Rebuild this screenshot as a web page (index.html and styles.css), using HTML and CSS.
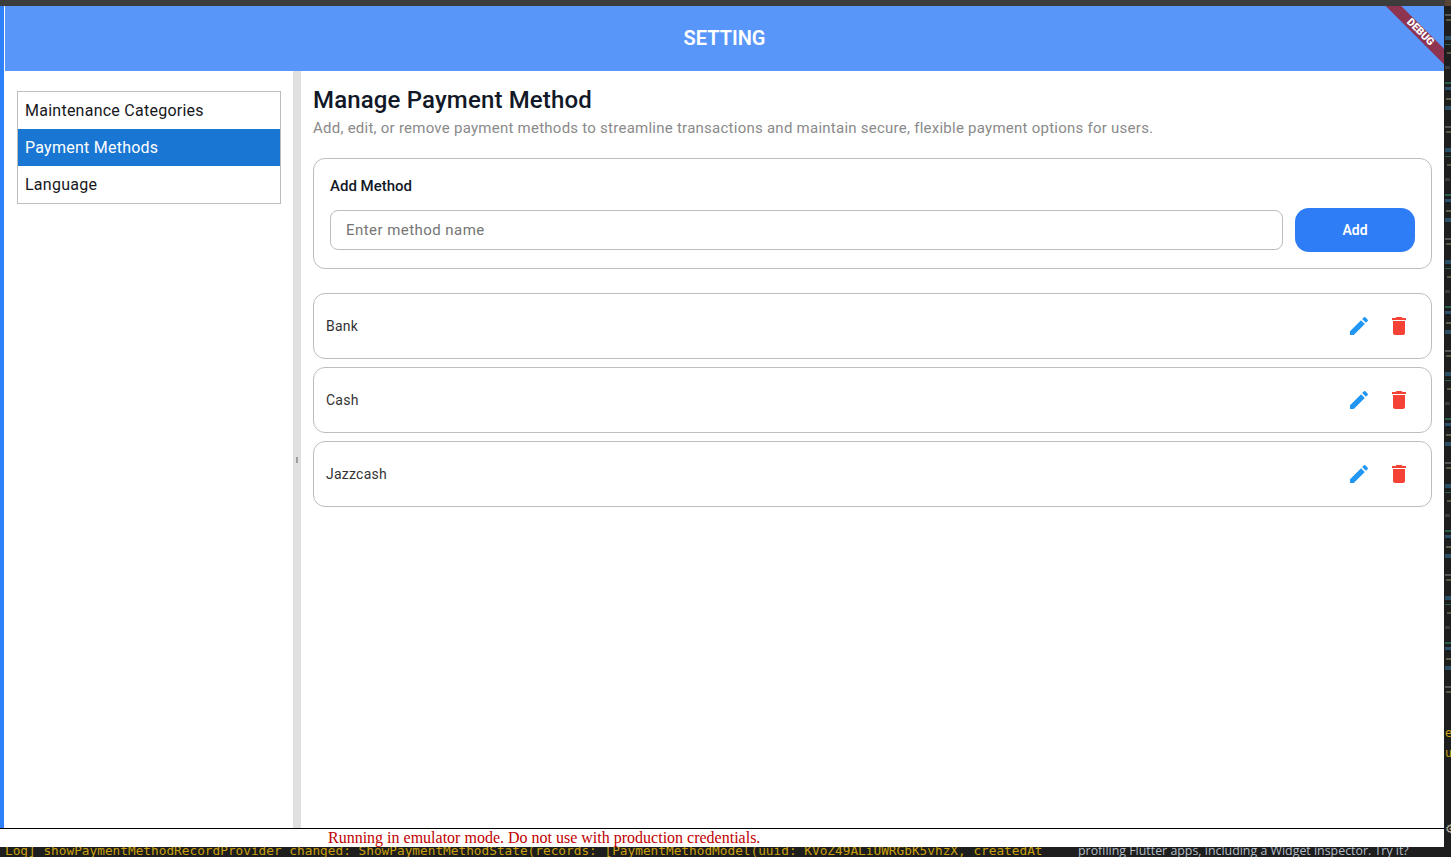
FILE: index.html
```html
<!DOCTYPE html>
<html lang="en">
<head>
<meta charset="utf-8">
<title>Setting</title>
<link rel="stylesheet" href="styles.css">
</head>
<body>
<div class="desktop">
  <div class="titlebar"></div>
  <div class="workspace">
    <div class="window">
      <div class="app">
        <div class="accent"></div>
        <div class="shell">
          <header class="appbar"><h1 class="appbar-title">SETTING</h1></header>
          <div class="panes">
            <aside class="sidebar">
              <nav class="menu">
                <div class="menu-item">Maintenance Categories</div>
                <div class="menu-item menu-item-active">Payment Methods</div>
                <div class="menu-item">Language</div>
              </nav>
            </aside>
            <div class="divider"><span class="handle"></span></div>
            <main class="content">
              <h2 class="title">Manage Payment Method</h2>
              <p class="subtitle">Add, edit, or remove payment methods to streamline transactions and maintain secure, flexible payment options for users.</p>
              <section class="add-card">
                <div class="add-label">Add Method</div>
                <div class="add-row">
                  <div class="input">Enter method name</div>
                  <div class="add-button">Add</div>
                </div>
              </section>
              <div class="list">
                <div class="row"><span class="row-name">Bank</span>
                  <svg class="icon icon-edit" viewBox="0 0 24 24"><path d="M3 17.25V21h3.75L17.81 9.94l-3.75-3.75L3 17.25zM20.71 7.04a1 1 0 0 0 0-1.41l-2.34-2.34a1 1 0 0 0-1.41 0l-1.83 1.83 3.75 3.75 1.83-1.83z"/></svg>
                  <svg class="icon icon-delete" viewBox="0 0 24 24"><path d="M6 19c0 1.1.9 2 2 2h8c1.1 0 2-.9 2-2V7H6v12zM19 4h-3.5l-1-1h-5l-1 1H5v2h14V4z"/></svg>
                </div>
                <div class="row"><span class="row-name">Cash</span>
                  <svg class="icon icon-edit" viewBox="0 0 24 24"><path d="M3 17.25V21h3.75L17.81 9.94l-3.75-3.75L3 17.25zM20.71 7.04a1 1 0 0 0 0-1.41l-2.34-2.34a1 1 0 0 0-1.41 0l-1.83 1.83 3.75 3.75 1.83-1.83z"/></svg>
                  <svg class="icon icon-delete" viewBox="0 0 24 24"><path d="M6 19c0 1.1.9 2 2 2h8c1.1 0 2-.9 2-2V7H6v12zM19 4h-3.5l-1-1h-5l-1 1H5v2h14V4z"/></svg>
                </div>
                <div class="row"><span class="row-name">Jazzcash</span>
                  <svg class="icon icon-edit" viewBox="0 0 24 24"><path d="M3 17.25V21h3.75L17.81 9.94l-3.75-3.75L3 17.25zM20.71 7.04a1 1 0 0 0 0-1.41l-2.34-2.34a1 1 0 0 0-1.41 0l-1.83 1.83 3.75 3.75 1.83-1.83z"/></svg>
                  <svg class="icon icon-delete" viewBox="0 0 24 24"><path d="M6 19c0 1.1.9 2 2 2h8c1.1 0 2-.9 2-2V7H6v12zM19 4h-3.5l-1-1h-5l-1 1H5v2h14V4z"/></svg>
                </div>
              </div>
            </main>
          </div>
        </div>
        <div class="debug-corner"><span class="debug-ribbon">DEBUG</span></div>
      </div>
      <div class="emulator-bar">Running in emulator mode. Do not use with production credentials.</div>
    </div>
    <svg class="rail" viewBox="0 0 7 841" aria-hidden="true">
      <defs>
        <pattern id="code" width="7" height="112" patternUnits="userSpaceOnUse">
          <rect x="1" y="8" width="6" height="2" fill="#4f584f"/>
          <rect x="2" y="13" width="5" height="2" fill="#5a5a4c"/>
          <rect x="1" y="30" width="6" height="4" fill="#2a4f66"/>
          <rect x="1" y="38" width="6" height="1" fill="#285f56"/>
          <rect x="3" y="46" width="4" height="2" fill="#5c5443"/>
          <rect x="1" y="60" width="5" height="3" fill="#3c3c3c"/>
          <rect x="1" y="76" width="6" height="2" fill="#285a52"/>
          <rect x="1" y="81" width="6" height="3" fill="#2a4f66"/>
          <rect x="2" y="92" width="5" height="2" fill="#625c4a"/>
          <rect x="1" y="100" width="6" height="4" fill="#2a4f66"/>
        </pattern>
      </defs>
      <rect x="0" y="0" width="7" height="690" fill="url(#code)"/>
      <text class="rail-text" x="1" y="731">e</text>
      <text class="rail-text" x="1" y="751">u</text>
      <text class="rail-gear" x="1" y="827">⚙</text>
    </svg>
  </div>
  <div class="console">
    <div class="console-log">Log] showPaymentMethodRecordProvider changed: ShowPaymentMethodState(records: [PaymentMethodModel(uuid: KVoZ49ALiUWRGbK5vhzX, createdAt</div>
    <div class="console-tip">profiling Flutter apps, including a Widget inspector. Try it?</div>
  </div>
</div>
</body>
</html>
```
FILE: styles.css
```css
* { box-sizing: border-box; }
html, body { margin: 0; padding: 0; height: 100%; overflow: hidden; background: #1e1e1e; }
body { font-family: Roboto, "Liberation Sans", sans-serif; }
.desktop { width: 1451px; height: 857px; display: flex; flex-direction: column; }
.titlebar { height: 6px; background: linear-gradient(90deg, #3c3c3c 1445px, #5a4436 1445px); flex: none; }
.workspace { flex: 1; display: flex; min-height: 0; }
.window { width: 1444px; flex: none; display: flex; flex-direction: column; }
.app { flex: 1; display: flex; position: relative; overflow: hidden; background: #fff; min-height: 0; }
.accent { width: 4px; flex: none; background: #2f80fb; }
.shell { flex: 1; display: flex; flex-direction: column; min-width: 0; border-left: 1px solid #fff; }
.appbar { height: 65px; flex: none; background: #5896fa; display: flex; align-items: center; justify-content: center; padding-bottom: 2px; }
.appbar-title { margin: 0; color: #fff; font-size: 20px; font-weight: 600; }
.panes { flex: 1; display: flex; min-height: 0; }
.sidebar { width: 288px; flex: none; padding: 20px 12px; }
.menu { border: 1px solid #bdbdbd; }
.menu-item { height: 37px; padding: 0 7px; display: flex; align-items: center; font-size: 16px; letter-spacing: .25px; color: #16181c; }
.menu-item-active { background: #1976d2; color: #fff; }
.divider { width: 8px; flex: none; background: #e0e0e0; display: flex; align-items: center; justify-content: center; }
.handle { width: 2px; height: 6px; margin-top: 20px; background: #9e9e9e; }
.content { flex: 1; min-width: 0; padding: 16px 12px; }
.title { margin: 0; font-size: 24px; line-height: 26px; font-weight: 500; color: #111827; letter-spacing: .15px; }
.subtitle { margin: 5px 0 0; font-size: 15px; line-height: 20px; color: #8a8a8a; letter-spacing: .25px; white-space: nowrap; }
.add-card { margin-top: 20px; height: 111px; padding: 16px; border: 1px solid #bdbdbd; border-radius: 12px; }
.add-label { font-size: 15px; line-height: 22px; font-weight: 500; color: #111827; }
.add-row { margin-top: 11px; display: flex; align-items: center; gap: 12px; }
.input { flex: 1; height: 40px; padding: 0 15px; display: flex; align-items: center; border: 1px solid #bdbdbd; border-radius: 8px; font-size: 15px; letter-spacing: .45px; color: #757575; }
.add-button { width: 120px; height: 44px; display: flex; align-items: center; justify-content: center; background: #2e7df6; border-radius: 14px; color: #fff; font-size: 14px; font-weight: 600; }
.list { margin-top: 24px; display: flex; flex-direction: column; gap: 8px; }
.row { height: 66px; padding: 0 20px 0 12px; display: flex; align-items: center; gap: 16px; border: 1px solid #bdbdbd; border-radius: 12px; }
.row-name { flex: 1; font-size: 14px; letter-spacing: .25px; color: #333; }
.icon { width: 24px; height: 24px; flex: none; }
.icon-edit { fill: #2196f3; }
.icon-delete { fill: #f44336; }
.debug-corner { position: absolute; top: 0; right: 0; width: 80px; height: 80px; overflow: hidden; pointer-events: none; }
.debug-ribbon { position: absolute; top: 21px; left: 6px; width: 100px; height: 11px; background: #8e3350; color: #fff; font-size: 10.5px; font-weight: 900; line-height: 10px; text-align: center; transform: rotate(45deg); }
.emulator-bar { height: 19px; flex: none; background: #fff; border-top: 1px solid #000; padding-left: 328px; font-family: "Liberation Serif", serif; font-size: 16px; line-height: 18px; color: #c00000; white-space: nowrap; }
.rail { flex: none; width: 7px; height: 841px; background: #1e1e1e; }
.rail-text { font-family: "DejaVu Sans Mono", monospace; font-size: 12px; fill: #c9a00c; }
.rail-gear { font-family: "DejaVu Sans", sans-serif; font-size: 12px; fill: #b9b2a0; }
.console { height: 10px; flex: none; background: #1e1e1e; display: flex; overflow: hidden; }
.console-log { width: 1078px; flex: none; padding-left: 5px; margin-top: -4px; font-family: "DejaVu Sans Mono", monospace; font-size: 12.78px; line-height: 16px; color: #c9a00c; white-space: nowrap; overflow: hidden; }
.console-tip { margin-top: -4px; font-family: "Open Sans", sans-serif; font-size: 12.4px; line-height: 16px; color: #b4bec8; white-space: nowrap; }
```
